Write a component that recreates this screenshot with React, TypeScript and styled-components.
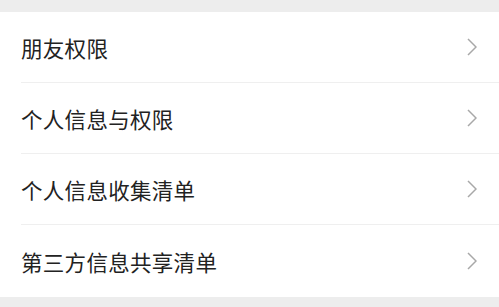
import React from "react";
import styled, { createGlobalStyle } from "styled-components";

const items = ["朋友权限", "个人信息与权限", "个人信息收集清单", "第三方信息共享清单"];

const App = () => {
  return (
    <>
      <GlobalStyle />
      <Page>
        <List>
          {items.map((label) => (
            <Row key={label}>
              <Label>{label}</Label>
              <Chevron viewBox="0 0 10 18" width={10} height={18}>
                <path d="M1 1l8 8-8 8" fill="none" stroke="#a8a8a8" strokeWidth="1.5" />
              </Chevron>
            </Row>
          ))}
        </List>
      </Page>
    </>
  );
};

export default App;

const GlobalStyle = createGlobalStyle`
  html, body {
    margin: 0;
    padding: 0;
    background: #ededed;
  }
`;

const Page = styled.div`
  width: 499px;
  height: 307px;
  padding-top: 12px;
  box-sizing: border-box;
  background: #ededed;
  font-family: "Noto Sans CJK SC", "Noto Sans", sans-serif;
`;

const List = styled.div`
  background: #ffffff;
  display: flex;
  flex-direction: column;
`;

const Row = styled.div`
  display: flex;
  align-items: center;
  justify-content: space-between;
  height: 71px;
  margin-left: 21px;
  padding-right: 22px;
  box-sizing: border-box;
  border-bottom: 1px solid #efefef;

  &:last-child {
    border-bottom: none;
    height: 72px;
  }
`;

const Label = styled.span`
  font-size: 21.5px;
  color: #222222;
  letter-spacing: 0.3px;
`;

const Chevron = styled.svg`
  display: block;
`;
